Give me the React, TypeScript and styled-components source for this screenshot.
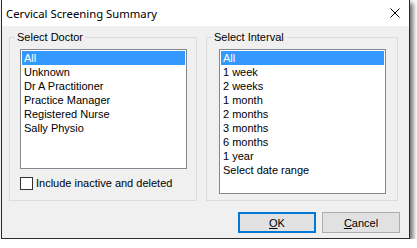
import React from "react";
import styled, { createGlobalStyle } from "styled-components";

const GlobalStyle = createGlobalStyle`
  html, body { margin: 0; padding: 0; background: #ffffff; }
  body { font-family: "Liberation Sans", Arial, sans-serif; font-size: 11px; color: #000; }
`;

const Window = styled.div`
  box-sizing: border-box;
  width: 409px;
  height: 239px;
  margin-left: 1px;
  border: 1px solid #2b2b2b;
  border-top: none;
  background: #f0f0f0;
  display: flex;
  flex-direction: column;
  box-shadow: 3px 3px 5px rgba(0, 0, 0, 0.6);
`;

const TitleBar = styled.div`
  height: 26px;
  flex: 0 0 26px;
  background: #ffffff;
  display: flex;
  align-items: center;
  justify-content: space-between;
  padding: 0 9px 0 4px;
`;

const Title = styled.span`
  font-family: "Noto Sans", "Segoe UI", sans-serif;
  font-size: 11.3px;
  color: #000;
`;

const CloseIcon = styled.svg`
  width: 10px;
  height: 10px;
  display: block;
`;

const Body = styled.div`
  flex: 1;
  display: flex;
  flex-direction: column;
  padding: 4px 9px 0 7px;
`;

const GroupsRow = styled.div`
  display: flex;
  gap: 9px;
  align-items: stretch;
`;

const Group = styled.fieldset<{ $width: number }>`
  box-sizing: border-box;
  width: ${(p) => p.$width}px;
  margin: 0;
  padding: 0;
  border: 1px solid #dcdcdc;
  min-width: 0;
  display: flex;
  flex-direction: column;
`;

const Legend = styled.legend`
  font-size: 11px;
  line-height: 14px;
  padding: 0 2px;
  margin-left: 5px;
  color: #000;
`;

const GroupInner = styled.div<{ $pad: string }>`
  padding: ${(p) => p.$pad};
  display: flex;
  flex-direction: column;
`;

const ListBox = styled.div<{ $height: number }>`
  box-sizing: border-box;
  height: ${(p) => p.$height}px;
  border: 1px solid #828790;
  background: #ffffff;
  padding: 1px;
  overflow: hidden;
`;

const ListItem = styled.div<{ $selected?: boolean }>`
  height: 14px;
  line-height: 14px;
  padding-left: 2px;
  white-space: nowrap;
  background: ${(p) => (p.$selected ? "#3399ff" : "transparent")};
  color: ${(p) => (p.$selected ? "#ffffff" : "#000000")};
`;

const CheckRow = styled.label`
  display: flex;
  align-items: center;
  gap: 3px;
  margin-top: 8px;
  height: 13px;
  line-height: 13px;
`;

const CheckBox = styled.span`
  box-sizing: border-box;
  width: 13px;
  height: 13px;
  border: 1px solid #333333;
  background: #ffffff;
  display: inline-block;
`;

const ButtonRow = styled.div`
  display: flex;
  justify-content: flex-end;
  gap: 6px;
  margin-top: 11px;
`;

const Button = styled.button<{ $default?: boolean }>`
  box-sizing: border-box;
  width: 78px;
  height: 21px;
  padding: 0;
  font-family: "Liberation Sans", Arial, sans-serif;
  font-size: 11px;
  color: #000;
  background: #e1e1e1;
  border: ${(p) => (p.$default ? "2px solid #0078d7" : "1px solid #adadad")};
  display: flex;
  align-items: center;
  justify-content: center;
`;

const Mnemonic = styled.span`
  text-decoration: underline;
`;

const doctors = ["All", "Unknown", "Dr A Practitioner", "Practice Manager", "Registered Nurse", "Sally Physio"];
const intervals = ["All", "1 week", "2 weeks", "1 month", "2 months", "3 months", "6 months", "1 year", "Select date range"];

export default function App() {
  return (
    <>
      <GlobalStyle />
      <Window>
        <TitleBar>
          <Title>Cervical Screening Summary</Title>
          <CloseIcon viewBox="0 0 10 10">
            <path d="M0.5 0.5 L9.5 9.5 M9.5 0.5 L0.5 9.5" stroke="#000" strokeWidth="1" fill="none" />
          </CloseIcon>
        </TitleBar>
        <Body>
          <GroupsRow>
            <Group $width={188}>
              <Legend>Select Doctor</Legend>
              <GroupInner $pad="5px 9px 10px 10px">
                <ListBox $height={120}>
                  {doctors.map((d, i) => (
                    <ListItem key={d} $selected={i === 0}>{d}</ListItem>
                  ))}
                </ListBox>
                <CheckRow>
                  <CheckBox />
                  <span>Include inactive and deleted</span>
                </CheckRow>
              </GroupInner>
            </Group>
            <Group $width={192}>
              <Legend>Select Interval</Legend>
              <GroupInner $pad="5px 11px 6px 12px">
                <ListBox $height={145}>
                  {intervals.map((d, i) => (
                    <ListItem key={d} $selected={i === 0}>{d}</ListItem>
                  ))}
                </ListBox>
              </GroupInner>
            </Group>
          </GroupsRow>
          <ButtonRow>
            <Button $default>
              <span><Mnemonic>O</Mnemonic>K</span>
            </Button>
            <Button>
              <span><Mnemonic>C</Mnemonic>ancel</span>
            </Button>
          </ButtonRow>
        </Body>
      </Window>
    </>
  );
}
